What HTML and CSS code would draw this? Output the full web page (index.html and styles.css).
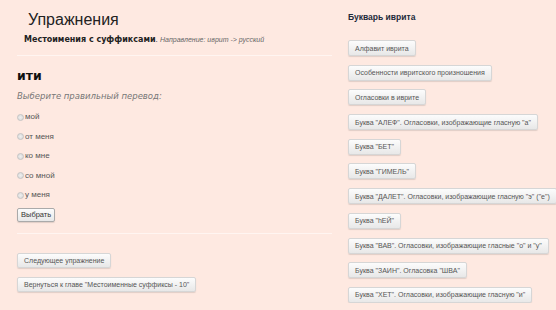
FILE: index.html
```html
<!DOCTYPE html>
<html lang="ru">

<head>
    <meta charset="UTF-8">
    <meta name="viewport" content="width=device-width, initial-scale=1.0">
    <title>Упражнения</title>
    <link rel="stylesheet" href="styles.css">
</head>

<body>
    <div class="page">
        <div class="main">
            <h1>Упражнения</h1>
            <p class="subtitle"><b>Местоимения с суффиксами</b>. <i>Направление: иврит -&gt; русский</i></p>
            <hr>
            <form class="exercise">
                <h2>ити</h2>
                <p class="hint">Выберите правильный перевод:</p>
                <label class="option"><input type="radio" name="answer" value="1">мой</label>
                <label class="option"><input type="radio" name="answer" value="2">от меня</label>
                <label class="option"><input type="radio" name="answer" value="3">ко мне</label>
                <label class="option"><input type="radio" name="answer" value="4">со мной</label>
                <label class="option"><input type="radio" name="answer" value="5">у меня</label>
                <button type="button" class="btn btn-submit">Выбрать</button>
            </form>
            <hr class="hr-bottom">
            <div class="nav-buttons">
                <button type="button" class="btn">Следующее упражнение</button>
                <button type="button" class="btn">Вернуться к главе "Местоименные суффиксы - 10"</button>
            </div>
        </div>

        <div class="sidebar">
            <h3>Букварь иврита</h3>
            <div class="lessons">
                <button type="button" class="btn">Алфавит иврита</button>
                <button type="button" class="btn">Особенности ивритского произношения</button>
                <button type="button" class="btn">Огласовки в иврите</button>
                <button type="button" class="btn">Буква "АЛЕФ". Огласовки, изображающие гласную "а"</button>
                <button type="button" class="btn">Буква "БЕТ"</button>
                <button type="button" class="btn">Буква "ГИМЕЛЬ"</button>
                <button type="button" class="btn">Буква "ДАЛЕТ". Огласовки, изображающие гласную "э" ("е")</button>
                <button type="button" class="btn">Буква "hЕЙ"</button>
                <button type="button" class="btn">Буква "ВАВ". Огласовки, изображающие гласные "о" и "у"</button>
                <button type="button" class="btn">Буква "ЗАИН". Огласовка "ШВА"</button>
                <button type="button" class="btn">Буква "ХЕТ". Огласовки, изображающие гласную "и"</button>
            </div>
        </div>
    </div>
</body>

</html>
```

FILE: styles.css
```css
body {
    font-family: "Liberation Sans", Arial, sans-serif;
    margin: 0;
    padding: 0;
    background-color: #fee9e1;
    color: #333;
}

.page {
    display: flex;
}

.main {
    flex-shrink: 0;
    width: 315px;
    padding-left: 17px;
}

h1 {
    font-size: 16px;
    line-height: 20px;
    font-weight: normal;
    color: #222;
    margin: 10px 0 0 11px;
}

.subtitle {
    font-size: 8px;
    line-height: 10px;
    margin: 5px 0 0 7px;
    color: #222;
    white-space: nowrap;
}

.subtitle b {
    font-family: "DejaVu Sans", Verdana, sans-serif;
}

.subtitle i {
    font-size: 7px;
    color: #666;
}

hr {
    border: none;
    border-top: 1px solid #fff5f1;
    margin: 10px 0 0;
}

.exercise {
    display: flex;
    flex-direction: column;
    align-items: flex-start;
}

h2 {
    font-family: "DejaVu Sans", Verdana, sans-serif;
    font-size: 12.5px;
    line-height: 14px;
    margin: 13px 0 0;
    color: #111;
}

.hint {
    font-family: "DejaVu Sans", Verdana, sans-serif;
    font-size: 8.5px;
    line-height: 10px;
    font-style: italic;
    color: #777;
    margin: 8px 0 6px;
}

.option {
    display: flex;
    align-items: center;
    height: 19.5px;
    font-size: 8px;
    color: #555;
}

.option input {
    appearance: none;
    width: 7px;
    height: 7px;
    margin: 1px 1px 0 0;
    border: 1px solid #c4c4c4;
    border-radius: 50%;
    background: radial-gradient(#eee, #d8d8d8);
}

.btn {
    font-family: "Liberation Sans", Arial, sans-serif;
    font-size: 7px;
    color: #555;
    white-space: nowrap;
    background: linear-gradient(#fcfcfc, #e8e8e8);
    border: 1px solid #d6d6d6;
    border-radius: 2px;
    box-shadow: 0 1px 1px rgba(0, 0, 0, 0.12);
    padding: 0 6px;
    height: 16px;
    cursor: pointer;
}

.btn-submit {
    font-size: 7.5px;
    height: 14px;
    padding: 0 3px;
    margin-top: 3px;
    color: #333;
    border-color: #aaa;
}

.hr-bottom {
    margin-top: 11px;
}

.nav-buttons {
    display: flex;
    flex-direction: column;
    align-items: flex-start;
    gap: 9px;
    margin-top: 19px;
}

.nav-buttons .btn {
    height: 15px;
}

.sidebar {
    padding-left: 16px;
}

h3 {
    font-size: 8.5px;
    line-height: 10px;
    color: #1d2a3a;
    margin: 12px 0 0;
}

.lessons {
    display: flex;
    flex-direction: column;
    align-items: flex-start;
    gap: 8.7px;
    margin-top: 18px;
}
```
